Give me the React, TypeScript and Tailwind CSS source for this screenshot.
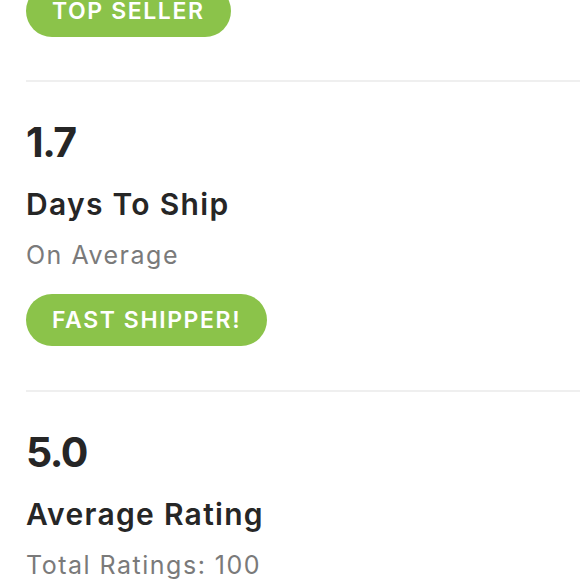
import React from "react";

interface StatProps {
  value: string;
  title: string;
  subtitle: string;
  badge?: string;
}

const Badge: React.FC<{ label: string }> = ({ label }) => (
  <span className="inline-flex h-[52px] items-center rounded-full bg-[#8bc34a] px-[26px] text-[23px] font-semibold uppercase tracking-[1.6px] text-white">
    {label}
  </span>
);

const Stat: React.FC<StatProps> = ({ value, title, subtitle, badge }) => {
  return (
    <div className="border-t-2 border-[#efefef] pt-[36px] pb-[44px]">
      <div className="text-[41px] font-bold leading-[48px] tracking-[-1.5px] text-[#262626]">
        {value}
      </div>
      <div className="mt-[18px] text-[30px] font-semibold leading-[40px] tracking-[1.3px] text-[#262626]">
        {title}
      </div>
      <div className="mt-[13px] text-[25px] leading-[36px] tracking-[1.5px] text-[#7a7a7a]">
        {subtitle}
      </div>
      {badge && (
        <div className="mt-[21px]">
          <Badge label={badge} />
        </div>
      )}
    </div>
  );
};

export default function App() {
  return (
    <div
      className="h-[580px] w-[580px] overflow-hidden bg-white pl-[26px]"
      style={{ fontFamily: "Inter, 'Noto Sans', sans-serif" }}
    >
      <div className="-mt-[15px] mb-[43px]">
        <Badge label="Top Seller" />
      </div>
      <Stat value="1.7" title="Days To Ship" subtitle="On Average" badge="Fast Shipper!" />
      <Stat value="5.0" title="Average Rating" subtitle="Total Ratings: 100" />
    </div>
  );
}
